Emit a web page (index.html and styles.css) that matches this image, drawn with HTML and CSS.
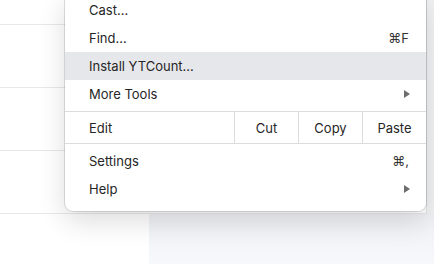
FILE: index.html
```html
<!DOCTYPE html>
<html lang="en">
<head>
    <meta charset="UTF-8">
    <meta name="viewport" content="width=device-width, initial-scale=1.0">
    <title>Menu</title>
    <link rel="stylesheet" href="styles.css">
</head>
<body>
    <div class="page">
        <div class="list">
            <div class="row first"></div>
            <div class="row"></div>
            <div class="row"></div>
            <div class="row"></div>
        </div>
        <div class="footer">
            <div class="footer-left"></div>
            <div class="footer-right"></div>
        </div>
        <div class="scroll-strip"></div>
    </div>

    <div class="menu">
        <div class="item">Cast…</div>
        <div class="item">Find…<span class="shortcut">⌘F</span></div>
        <div class="item active">Install YTCount…</div>
        <div class="item">More Tools
            <svg class="arrow" width="6" height="8" viewBox="0 0 6 8"><path d="M0 0 L6 4 L0 8 Z" fill="#6d6d6d"/></svg>
        </div>
        <div class="edit">
            <div class="edit-label">Edit</div>
            <div class="edit-cell">Cut</div>
            <div class="edit-cell">Copy</div>
            <div class="edit-cell">Paste</div>
        </div>
        <div class="item">Settings<span class="shortcut">⌘,</span></div>
        <div class="item">Help
            <svg class="arrow" width="6" height="8" viewBox="0 0 6 8"><path d="M0 0 L6 4 L0 8 Z" fill="#6d6d6d"/></svg>
        </div>
    </div>
</body>
</html>
```

FILE: styles.css
```css
body {
    margin: 0;
    padding: 0;
    width: 434px;
    height: 264px;
    overflow: hidden;
    position: relative;
    background: #fff;
    font-family: Inter, "Liberation Sans", "DejaVu Sans", sans-serif;
}

.page {
    height: 264px;
    display: flex;
    flex-direction: column;
}

.row {
    height: 62px;
    border-bottom: 1px solid #e8e8e8;
}

.row.first {
    height: 24px;
}

.footer {
    flex: 1;
    display: flex;
}

.footer-left {
    width: 149px;
    background: #fff;
}

.footer-right {
    flex: 1;
    background: linear-gradient(#eff1f5, #f7f8fa);
}

.scroll-strip {
    position: absolute;
    top: 0;
    right: 0;
    width: 7px;
    height: 214px;
    background: #f1f2f4;
    border-left: 1px solid #e4e5e7;
}

.menu {
    position: absolute;
    left: 65px;
    bottom: 53px;
    width: 361px;
    padding: 4px 0 8px;
    background: #fff;
    border-radius: 8px;
    box-shadow: 0 0 0 1px rgba(0, 0, 0, 0.12), 0 10px 28px rgba(0, 0, 0, 0.14);
    font-size: 13px;
    color: #262626;
}

.item {
    height: 28px;
    padding: 0 17px 0 24px;
    display: flex;
    align-items: center;
    justify-content: space-between;
}

.item.active {
    background: #e6e7ea;
}

.shortcut {
    color: #333;
}

.arrow {
    margin-right: -1px;
}

.edit {
    display: flex;
    height: 31px;
    margin: 3px 0;
    border-top: 1px solid #dcdcdc;
    border-bottom: 1px solid #dcdcdc;
}

.edit-label {
    flex: 1;
    padding-left: 24px;
    display: flex;
    align-items: center;
}

.edit-cell {
    width: 63px;
    border-left: 1px solid #dcdcdc;
    display: flex;
    align-items: center;
    justify-content: center;
}
```
